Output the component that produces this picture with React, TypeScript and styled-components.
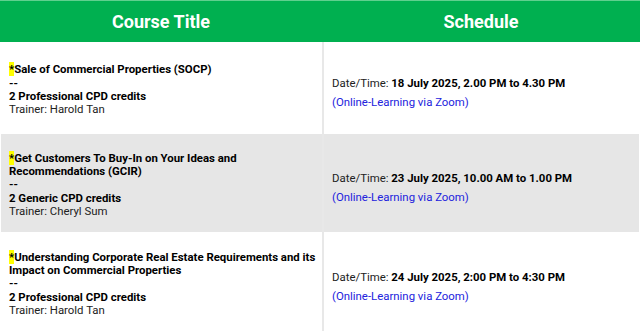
import styled, { createGlobalStyle } from 'styled-components';

const GlobalStyle = createGlobalStyle`
  body {
    margin: 0;
    background: #fff;
    font-family: Roboto, 'Liberation Sans', Arial, sans-serif;
  }
`;

type Course = {
  title: string;
  credits: string;
  trainer: string;
  date: string;
  height: number;
};

const courses: Course[] = [
  {
    title: 'Sale of Commercial Properties (SOCP)',
    credits: '2 Professional CPD credits',
    trainer: 'Harold Tan',
    date: '18 July 2025, 2.00 PM to 4.30 PM',
    height: 92,
  },
  {
    title: 'Get Customers To Buy-In on Your Ideas and Recommendations (GCIR)',
    credits: '2 Generic CPD credits',
    trainer: 'Cheryl Sum',
    date: '23 July 2025, 10.00 AM to 1.00 PM',
    height: 98,
  },
  {
    title:
      'Understanding Corporate Real Estate Requirements and its Impact on Commercial Properties',
    credits: '2 Professional CPD credits',
    trainer: 'Harold Tan',
    date: '24 July 2025, 2:00 PM to 4:30 PM',
    height: 100,
  },
];

function App() {
  return (
    <>
      <GlobalStyle />
      <Table>
        <HeaderRow>
          <HeaderCell>Course Title</HeaderCell>
          <HeaderCell>Schedule</HeaderCell>
        </HeaderRow>
        {courses.map((c, i) => (
          <Row key={c.title} $striped={i % 2 === 1} $height={c.height}>
            <CourseCell>
              <Title>
                <Mark>*</Mark>
                {c.title}
              </Title>
              <Bold>--</Bold>
              <Bold>{c.credits}</Bold>
              <Plain>Trainer: {c.trainer}</Plain>
            </CourseCell>
            <ScheduleCell>
              <Plain>
                Date/Time: <strong>{c.date}</strong>
              </Plain>
              <Venue>(Online-Learning via Zoom)</Venue>
            </ScheduleCell>
          </Row>
        ))}
      </Table>
    </>
  );
}

export default App;

const Table = styled.div`
  width: 640px;
  display: flex;
  flex-direction: column;
`;

const HeaderRow = styled.div`
  display: grid;
  grid-template-columns: 322px 1fr;
  height: 42px;
  background: #00b050;
  border-top: 1px solid #5fd08e;
  box-sizing: border-box;
`;

const HeaderCell = styled.div`
  display: flex;
  align-items: center;
  justify-content: center;
  color: #fff;
  font-size: 18px;
  font-weight: 700;
`;

const Row = styled.div<{ $striped: boolean; $height: number }>`
  display: grid;
  grid-template-columns: 321px 1fr;
  height: ${({ $height }) => $height}px;
  margin: 0 1px;
  background: ${({ $striped }) => ($striped ? '#e6e6e6' : '#fff')};
`;

const CourseCell = styled.div`
  display: flex;
  flex-direction: column;
  justify-content: center;
  padding: 4px 2px 0 8px;
  font-size: 11.4px;
  line-height: 13.3px;
  color: #000;
`;

const ScheduleCell = styled.div`
  display: flex;
  flex-direction: column;
  justify-content: center;
  gap: 5px;
  padding: 8px 8px 0;
  border-left: 2px solid #e8e8e8;
  font-size: 11.4px;
  line-height: 14px;
  color: #222;

  strong {
    color: #000;
    font-weight: 700;
  }
`;

const Title = styled.div`
  font-weight: 700;
`;

const Mark = styled.span`
  background: #ffff00;
`;

const Bold = styled.div`
  font-weight: 700;
`;

const Plain = styled.div`
  color: #222;
`;

const Venue = styled.div`
  color: #2222dd;
`;
